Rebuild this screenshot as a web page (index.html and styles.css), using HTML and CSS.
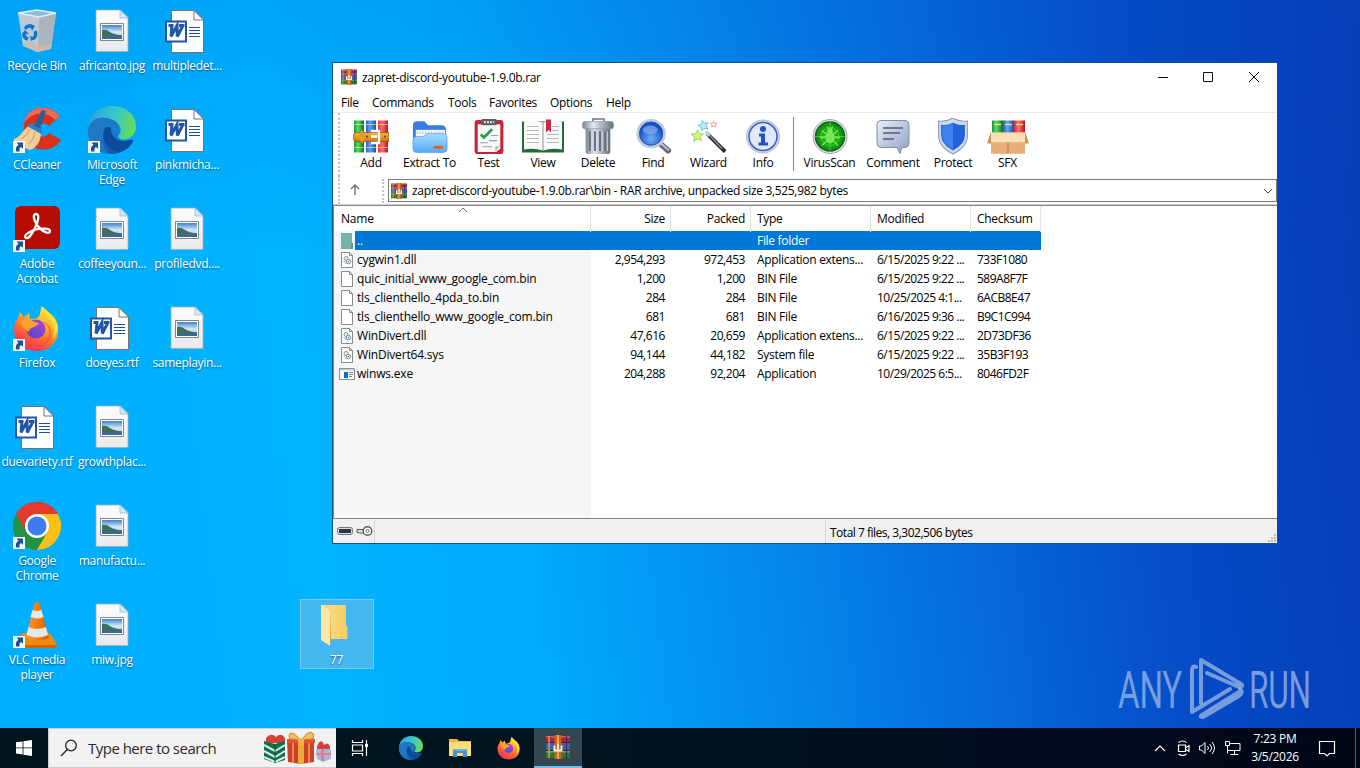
FILE: index.html
```html
<!DOCTYPE html>
<html lang="en">
<head>
<meta charset="utf-8">
<title>Desktop</title>
<link rel="stylesheet" href="styles.css">
</head>
<body>
<svg class="defs" width="0" height="0" aria-hidden="true">
  <defs>
    <linearGradient id="gPage" x2="0" y2="1"><stop offset="0" stop-color="#fdfdfd"/><stop offset="1" stop-color="#e9eaec"/></linearGradient>
    <linearGradient id="gSky" x2="0" y2="1"><stop offset="0" stop-color="#3f83d0"/><stop offset=".5" stop-color="#d6e8f8"/><stop offset="1" stop-color="#9fc0e0"/></linearGradient>
    <linearGradient id="gBin" x2="1" y2="1"><stop offset="0" stop-color="#a9cfe4"/><stop offset="1" stop-color="#b7bec6"/></linearGradient>
    <linearGradient id="gFox" x1=".8" y1="0" x2=".25" y2="1"><stop offset="0" stop-color="#fff04a"/><stop offset=".35" stop-color="#ffb52b"/><stop offset=".65" stop-color="#ff6a2f"/><stop offset="1" stop-color="#f0206a"/></linearGradient>
    <linearGradient id="gFoxIn" x1="1" x2="0" y2="1"><stop offset="0" stop-color="#b445d8"/><stop offset="1" stop-color="#4b46c8"/></linearGradient>
    <linearGradient id="gEdgeA" x1="0" y1=".3" x2="1" y2=".5"><stop offset="0" stop-color="#2aa3dc"/><stop offset=".5" stop-color="#35c6cf"/><stop offset="1" stop-color="#6bdc57"/></linearGradient>
    <linearGradient id="gEdgeB" x2="0" y2="1"><stop offset="0" stop-color="#1d8fd6"/><stop offset="1" stop-color="#1259b0"/></linearGradient>
    <linearGradient id="gCone" x2="1"><stop offset="0" stop-color="#ff9a2c"/><stop offset=".5" stop-color="#f57c0c"/><stop offset="1" stop-color="#d85c00"/></linearGradient>
    <linearGradient id="gGreen" x2="1"><stop offset="0" stop-color="#0f9a32"/><stop offset=".4" stop-color="#58da6a"/><stop offset="1" stop-color="#0b6f24"/></linearGradient>
    <linearGradient id="gBlue" x2="1"><stop offset="0" stop-color="#1d62c8"/><stop offset=".4" stop-color="#62a4f4"/><stop offset="1" stop-color="#1450ac"/></linearGradient>
    <linearGradient id="gRed" x2="1"><stop offset="0" stop-color="#e02b36"/><stop offset=".4" stop-color="#ff7078"/><stop offset="1" stop-color="#b8121e"/></linearGradient>
    <linearGradient id="gBelt" x2="0" y2="1"><stop offset="0" stop-color="#f7b93d"/><stop offset="1" stop-color="#cf7412"/></linearGradient>
    <linearGradient id="gFolder" x2="0" y2="1"><stop offset="0" stop-color="#a9dcff"/><stop offset="1" stop-color="#55a9f4"/></linearGradient>
    <linearGradient id="gSteel" x2="1"><stop offset="0" stop-color="#7c8796"/><stop offset=".35" stop-color="#e3e9f1"/><stop offset="1" stop-color="#66707e"/></linearGradient>
    <linearGradient id="gComment" x2="1" y2="1"><stop offset="0" stop-color="#eaf0f9"/><stop offset="1" stop-color="#8d9fbe"/></linearGradient>
    <radialGradient id="gLens" cx=".5" cy=".7"><stop offset="0" stop-color="#6fb0ff"/><stop offset="1" stop-color="#174fc0"/></radialGradient>
    <radialGradient id="gScan"><stop offset="0" stop-color="#2ed01c"/><stop offset="1" stop-color="#0a8c0c"/></radialGradient>
    <linearGradient id="gYel" x2="1"><stop offset="0" stop-color="#fee08d"/><stop offset="1" stop-color="#f6cb62"/></linearGradient>

    <symbol id="shortcut" viewBox="0 0 12 12">
      <path d="M0 0h12v12H0z" fill="#f7f7f7"/>
      <path d="M3.500 1.500h6.500v6.300L8 6C6.600 7 6.200 8.300 6.600 10.500H3.200C2.200 7.400 3.300 5.200 5.500 3.700z" fill="#1d4f93"/>
    </symbol>
    <symbol id="jpg" viewBox="0 0 48 48">
      <path d="M8 3h24.500l7.500 7.500V44.500H8z" fill="url(#gPage)" stroke="#a5adb3" stroke-width=".8"/>
      <path d="M32 3v8h8z" fill="#cdeafa" stroke="#9fb0ba" stroke-width=".7"/>
      <path d="M12.500 16.500h23v17h-23z" fill="#fff" stroke="#7e8790"/>
      <path d="M14 18h20v14H14z" fill="url(#gSky)"/>
      <path d="M14 23q4-1 8 2t12 3.200v1H14z" fill="#3d7156"/>
      <path d="M14 28.700h20V32H14z" fill="#3c6892"/>
    </symbol>
    <symbol id="word" viewBox="0 0 48 48">
      <path d="M8.500 3.500h22.500L40.500 13V45.500h-32z" fill="#fff" stroke="#77706e"/>
      <path d="M31 3.500V13h9.500z" fill="#fff" stroke="#77706e"/>
      <path d="M26 20.500h11M26 23.500h11M26 26.500h11M26 29.500h11" stroke="#1f4f9d" stroke-width="1"/>
      <path d="M3 14.500h20v20H3z" fill="#fff" stroke="#2155a8" stroke-width="2"/>
      <path d="M5.500 18.500h5M9 18.500l-1 11 6-11 .3 11 5.700-11M16 18.500h5.500" fill="none" stroke="#2155a8" stroke-width="3"/>
    </symbol>
    <symbol id="edge" viewBox="0 0 48 48">
      <path d="M0 24C0 10 10 0 24 0c14 0 24 9 24 20 0 8-5 13-12 13-5 0-6-2-5-4 2-2 3-5 1-9-5-9-27-12-32 4z" fill="url(#gEdgeA)"/>
      <path d="M0 25C1 14 9 11 17 12c10 1 15 7 15 13 0 2-1 3-2 5-2 3 5 6 12 4 3-1 4 0 2 3-5 7-12 11-20 11C10 48 0 38 0 25z" fill="url(#gEdgeB)"/>
      <path d="M17 21c-5 10 1 22 12 25 7 0 12-4 15-9 2-3 1-4-2-3-12 4-20-3-19-13z" fill="#0d4c9c"/>
      <path d="M14 36C11 27 16 20 23 20c5 0 8 3 9 5-1-8-7-13-15-13C9 11 1 15 0 25c0 12 10 22 22 23-4-2-6-6-8-12z" fill="#1f78c4"/>
    </symbol>
    <symbol id="firefox" viewBox="0 0 48 48">
      <path d="M29 2c3 3 5 6 9 9 5 5 8 11 7 18-1 11-10 18-21 18C11 47 1 38 1 25c0-5 2-8 4-11l2-6 4 5 5-4 1 6c3 0 7 0 9-3 2-3 1-7 3-10z" fill="url(#gFox)"/>
      <circle cx="23" cy="25" r="9.500" fill="url(#gFoxIn)"/>
      <path d="M8 17c4-3 9-1 11 0 3 1 6 1 7 3l-5 3c-4 1-5 3-5 5-4-3-8-5-8-11z" fill="#ffa12b"/>
      <path d="M1 25c1 8 5 13 11 16 9 4 20 0 23-8 2-5 1-11-5-16 11 4 11 18 3 24-7 6-18 7-25 1-4-4-7-9-7-17z" fill="#fb4b42" opacity=".45"/>
      <path d="M29 2c1 6 7 11 10 16s3 11 1 16c4-4 6-10 4-15C42 11 34 8 29 2z" fill="#ffdf3c"/>
    </symbol>
    <symbol id="rar" viewBox="0 0 24 24">
      <path d="M0 1h24v6H0z" fill="#a82340"/><path d="M0 8h24v7H0z" fill="#4060b4"/><path d="M0 16h24v7H0z" fill="#287a2c"/>
      <path d="M0 7h24v1H0zM0 15h24v1H0z" fill="#2c2240"/>
      <path d="M0 1h24v1.500H0z" fill="#dc5c60"/><path d="M0 16h24v1.500H0z" fill="#5cbf56"/>
      <path d="M3 1v22" stroke="#d0a04c" stroke-width="1.400"/><path d="M20.500 1v22" stroke="#4a2a50" stroke-width="1.200"/>
      <path d="M8.500 0h7v24h-7z" fill="#c8621c"/><path d="M11 0h2v24h-2z" fill="#efa642"/>
      <path d="M8.500 10.500v5h7v-5M12 9v5" fill="none" stroke="#fff3e2" stroke-width="1.800"/>
    </symbol>
    <symbol id="blank" viewBox="0 0 16 16"><path d="M2.500.5h8l3 3v12h-11z" fill="#fff" stroke="#8b8b8b"/><path d="M10.500.5v3h3" fill="none" stroke="#8b8b8b"/></symbol>
    <symbol id="dll" viewBox="0 0 16 16">
      <path d="M2.500.5h8l3 3v12h-11z" fill="#fff" stroke="#8b8b8b"/><path d="M10.500.5v3h3" fill="none" stroke="#8b8b8b"/>
      <circle cx="7" cy="6.500" r="2" fill="#e8f1f5" stroke="#7f99a7"/><circle cx="9.500" cy="9.500" r="2.300" fill="#dbe5ea" stroke="#8094a0"/><circle cx="9.500" cy="9.500" r=".6" fill="#4e6876"/>
      <path d="M4.500 9l3 3" stroke="#9bb0bc"/>
    </symbol>
  </defs>
</svg>

<main class="desktop">
  <section class="icons">
    <div class="item"><svg class="pic" viewBox="0 0 48 48"><path d="M5 6l19-3 19 3-5 36-14 3-14-6z" fill="url(#gBin)"/><path d="M5 6l21 4 17-4-5 36-13 3z" fill="#c5cbd1" opacity=".75"/><path d="M26 10l17-4-5 36-13 3z" fill="#a3abb4" opacity=".7"/><path d="M5 6l19-3 19 3-17 4z" fill="#8abfdc" stroke="#e4eef4" stroke-width="1.300"/><path d="M11 35l15 4 12-3-1 6-12 3-14-6z" fill="#d6b9a4" opacity=".75"/><g fill="none" stroke="#1276cb" stroke-width="3.400"><path d="M12 22q3-5 8-2M22 24q2 5-2 8M15 32q-5-1-4-6"/></g><path d="M17 17l5 2-3 5zM23 31l-5 3-1-5zM9 27l3-4 4 4z" fill="#1276cb"/></svg><span class="label">Recycle Bin</span></div>
    <div class="item"><svg class="pic" viewBox="0 0 48 48"><path d="M47 10C39 1 26-1 17 6 8 14 9 32 18 39c9 8 24 5 30-5l-12-7c-4 6-10 4-11-1-1-7 5-12 11-6z" fill="#d8311f"/><path d="M47 10C39 1 26-1 17 6q-5 5-6 11C19 6 33 4 42 14z" fill="#ef6a52"/><path d="M1 33c7-2 9-10 15-13l12 7c0 7-4 15-11 17L1 37z" fill="#f1cf94"/><path d="M8 33q6-3 9-10M15 38q6-4 7-12" stroke="#c99f5c" fill="none"/><path d="M14 20l4-3 11 5-1 6z" fill="#2f7dc4"/><path d="M21 20L29 4l4 1-6 17z" fill="#235f9e"/></svg><svg class="short"><use href="#shortcut"/></svg><span class="label">CCleaner</span></div>
    <div class="item"><svg class="pic" viewBox="0 0 48 48"><rect x="2" y="1" width="45" height="43" rx="6" fill="#b60d00"/><path d="M13 33c-3-2 2-6 8-8 7-2 16-2 16 1 0 4-8 1-13-6-4-6-4-11-1-11 4 0 2 8-1 14-4 8-7 11-9 10z" fill="none" stroke="#fff" stroke-width="2.300"/></svg><svg class="short"><use href="#shortcut"/></svg><span class="label">Adobe<br>Acrobat</span></div>
    <div class="item"><svg class="pic"><use href="#firefox"/></svg><svg class="short"><use href="#shortcut"/></svg><span class="label">Firefox</span></div>
    <div class="item"><svg class="pic"><use href="#word"/></svg><span class="label">duevariety.rtf</span></div>
    <div class="item"><svg class="pic" viewBox="0 0 48 48"><circle cx="24" cy="24" r="24" fill="#229342"/><path d="M24 12H44.800A24 24 0 0 1 24 48l10.400-18z" fill="#fbc116"/><path d="M3.200 12A24 24 0 0 1 44.800 12H24L13.600 30z" fill="#e33b2e"/><circle cx="24" cy="24" r="12" fill="#fff"/><circle cx="24" cy="24" r="9.500" fill="#3d7cf0"/></svg><svg class="short"><use href="#shortcut"/></svg><span class="label">Google<br>Chrome</span></div>
    <div class="item"><svg class="pic" viewBox="0 0 48 48"><path d="M9 32h28l7 12-2 3H7l-2-3z" fill="#f08a10"/><path d="M5 44h39l-1 3H7z" fill="#d26400"/><path d="M24 1q2 0 3 3l9 33q-12 6-23 0L21 4q1-3 3-3z" fill="url(#gCone)"/><path d="M19.600 9q4 2 8.800 0l2 7q-6 3-13 0zM15.500 26q8 4 17.500 0l2 8q-11 5-21.500 0z" fill="#e7e7e7"/></svg><svg class="short"><use href="#shortcut"/></svg><span class="label">VLC media<br>player</span></div>

    <div class="item"><svg class="pic"><use href="#jpg"/></svg><span class="label">africanto.jpg</span></div>
    <div class="item"><svg class="pic"><use href="#edge"/></svg><svg class="short"><use href="#shortcut"/></svg><span class="label">Microsoft<br>Edge</span></div>
    <div class="item"><svg class="pic"><use href="#jpg"/></svg><span class="label">coffeeyoun...</span></div>
    <div class="item"><svg class="pic"><use href="#word"/></svg><span class="label">doeyes.rtf</span></div>
    <div class="item"><svg class="pic"><use href="#jpg"/></svg><span class="label">growthplac...</span></div>
    <div class="item"><svg class="pic"><use href="#jpg"/></svg><span class="label">manufactu...</span></div>
    <div class="item"><svg class="pic"><use href="#jpg"/></svg><span class="label">miw.jpg</span></div>

    <div class="item"><svg class="pic"><use href="#word"/></svg><span class="label">multipledet...</span></div>
    <div class="item"><svg class="pic"><use href="#word"/></svg><span class="label">pinkmicha...</span></div>
    <div class="item"><svg class="pic"><use href="#jpg"/></svg><span class="label">profiledvd....</span></div>
    <div class="item"><svg class="pic"><use href="#jpg"/></svg><span class="label">sameplayin...</span></div>
  </section>

  <div class="folder">
    <svg viewBox="0 0 48 48" width="48" height="48"><path d="M8 4h25v20l1.500 2v12H8z" fill="url(#gYel)"/><path d="M8 4l9 6v35l-9-6z" fill="#ffe9a8"/><path d="M17 10v35l1-8z" fill="#d9a93c"/></svg>
    <span class="label">77</span>
  </div>

  <svg class="watermark" viewBox="0 0 200 66" width="200" height="66">
    <g fill="#9db8e6" fill-opacity=".75" font-family="Roboto, sans-serif" font-size="52" font-weight="400">
      <text x="0" y="52" textLength="64" lengthAdjust="spacingAndGlyphs">ANY</text>
      <text x="131" y="52" textLength="62" lengthAdjust="spacingAndGlyphs">RUN</text>
    </g>
    <g fill="none" stroke="#9db8e6" stroke-opacity=".75" stroke-width="4" stroke-linejoin="round" stroke-linecap="round">
      <path d="M83 47V4L123 28q3 3-2 3L89 17"/><path d="M121 36L84 59q-3 2 1 2l36-21q5-4 1-7"/><path d="M78 11q-4-2-4 3v42l38-23"/>
    </g>
  </svg>

  <section class="window">
    <header class="titlebar">
      <svg class="i16"><use href="#rar"/></svg><span class="title">zapret-discord-youtube-1.9.0b.rar</span>
      <svg class="controls" viewBox="0 0 138 28" width="138" height="28"><g fill="none" stroke="#111" stroke-width="1"><path d="M19 13.500h10M64.500 8.500h9v9h-9zM110 8l10 10M120 8l-10 10"/></g></svg>
    </header>
    <nav class="menu"><span class="m1">File</span><span class="m2">Commands</span><span class="m3">Tools</span><span class="m4">Favorites</span><span class="m5">Options</span><span>Help</span></nav>
    <div class="rebar">
      <div class="toolbar">
        <div class="tool t-add"><svg viewBox="0 0 36 36"><path d="M1 2h10v32H1z" fill="url(#gGreen)"/><path d="M13 2h10v32H13z" fill="url(#gBlue)"/><path d="M25 2h10v32H25z" fill="url(#gRed)"/><path d="M1 6h10M1 29h10M13 6h10M13 29h10M25 6h10M25 29h10" stroke="#ffe066" opacity=".7"/><path d="M0 18q0-4 4-4h32v9H4q-4 0-4-5z" fill="url(#gBelt)" stroke="#8e4d06" stroke-width=".7"/><path d="M9 11l4 7-4 7-4-7z" fill="#e89a2a"/><path d="M18 12.500h8v12h-8M18 18h6" fill="none" stroke="#fff" stroke-width="2.300"/><circle cx="14" cy="18" r="1" fill="#693a04"/><circle cx="32" cy="18" r="1" fill="#693a04"/></svg><span>Add</span></div>
        <div class="tool t-ext"><svg viewBox="0 0 38 36"><path d="M1 30V6q0-4 4-4h8l4 4h14q5 0 5 5v19z" fill="#3a7ce8"/><path d="M4 11h31v14H4z" fill="#f5f9ff"/><path d="M5 14h28" stroke="#8fb0dd" stroke-width="2" stroke-dasharray="1 2"/><path d="M1 22q0-4 4-4h7l4-3h17q4 0 4 4v12q0 4-4 4H5q-4 0-4-4z" fill="url(#gFolder)" stroke="#4b9be8" stroke-width=".7"/><rect x="23" y="28" width="10" height="3" rx="1" fill="#e85c2b"/></svg><span>Extract To</span></div>
        <div class="tool t-test"><svg viewBox="0 0 30 36"><rect x="1" y="2" width="28" height="33" rx="3" fill="#cc2034"/><path d="M4 6h22v24l-4 3H4z" fill="#f6f7f8"/><path d="M26 27l-5 6v-5z" fill="#b6bec6"/><rect x="7" y="1" width="16" height="6" rx="2" fill="#5d5b62"/><path d="M10 4h10" stroke="#d8d8dc" stroke-width="2" stroke-dasharray="2 1"/><path d="M7 16l3 3 8-8" fill="none" stroke="#2a9b4c" stroke-width="2.600"/><path d="M17 17h7M15 22h8M6 24h8M9 28h9" stroke="#9aa0a6"/></svg><span>Test</span></div>
        <div class="tool t-view"><svg class="w44" viewBox="0 0 44 36"><path d="M1 3h42v31H1z" fill="#246b35"/><path d="M3 3q10-2 19 1 9-3 19-1v28q-10-2-19 1-9-3-19-1z" fill="#fafafa"/><path d="M22 4v28" stroke="#8e9494"/><path d="M6 8h12M6 12h12M6 16h12M6 20h12M6 24h12M26 16h12M26 20h12M26 24h12M31 8h7M31 12h7" stroke="#b3b8ba"/><path d="M25 1h5v13l-2.500-2.500L25 14z" fill="#c82c38"/></svg><span>View</span></div>
        <div class="tool t-del"><svg viewBox="0 0 32 36"><path d="M11 3V1h11v2" fill="none" stroke="#707a86" stroke-width="1.500"/><path d="M4 10h24v23q0 2-2 2H6q-2 0-2-2z" fill="url(#gSteel)"/><rect x="1" y="3.500" width="30" height="7" rx="2" fill="url(#gSteel)" stroke="#7c8795" stroke-width=".6"/><path d="M8 13v19M13 13v19M18 13v19M23 13v19" stroke="#66707e" stroke-width="2"/><path d="M10 13v19M15 13v19M20 13v19M25 13v19" stroke="#d5dde8"/></svg><span>Delete</span></div>
        <div class="tool t-find"><svg viewBox="0 0 38 36"><path d="M26 25l9 8" stroke="#656b74" stroke-width="6" stroke-linecap="round"/><path d="M26 24l9 8" stroke="#bec5ce" stroke-width="2" stroke-linecap="round"/><circle cx="17" cy="15" r="14" fill="url(#gLens)" stroke="#bccbe0" stroke-width="3"/><circle cx="17" cy="15" r="12.200" fill="none" stroke="#2b58a8"/><ellipse cx="16" cy="11" rx="8" ry="4.500" fill="#8db4ee" opacity=".65"/></svg><span>Find</span></div>
        <div class="tool t-wiz"><svg viewBox="0 0 38 36"><path d="M17 15L36 34" stroke="#24272c" stroke-width="4"/><path d="M17 14l16 17" stroke="#8b9098" stroke-width="1.500"/><path d="M15.500 13l4 4" stroke="#c9cbce" stroke-width="4"/><path d="M7 11l2 4 4 .3-3 3 1.300 4-4.300-2-4.300 3 1-5L0 15.500l5-.5z" fill="#d4f287" stroke="#97d652"/><path d="M12 1l2 3 4-.5-2 3.300 2 3.200-4-.5-3 2.500-.5-4-3-1.800 3.500-1.500z" fill="#bdeafb" stroke="#5cc3ec"/><path d="M24 2l1 2h2.400l-1.800 1.700.6 2.300-2.200-1.200L21.800 8l.5-2.300-1.800-1.700h2.600z" fill="#fff" stroke="#ee8078" stroke-width=".8"/></svg><span>Wizard</span></div>
        <div class="tool t-info"><svg viewBox="0 0 36 36"><circle cx="18" cy="18" r="16.500" fill="#c8d3ef" stroke="#aebbe0"/><circle cx="18" cy="18" r="14" fill="#e0e9fa" stroke="#3c60b8" stroke-width="1.500"/><circle cx="18" cy="10.500" r="3" fill="#2450c8"/><path d="M14 15h6v9h3v3H13.500v-3H16v-6h-2z" fill="#2450c8"/></svg><span>Info</span></div>
        <i class="vsep"></i>
        <div class="tool t-scan"><svg viewBox="0 0 36 36"><circle cx="18" cy="18" r="17" fill="#dfe4e2" stroke="#8b9690" stroke-width=".8"/><circle cx="18" cy="18" r="14.500" fill="url(#gScan)" stroke="#185a20" stroke-width="1.500"/><path d="M18 3v30M3 18h30" stroke="#8be878" stroke-width=".5"/><circle cx="18" cy="18" r="9" fill="none" stroke="#6bdf56" stroke-width=".6"/><ellipse cx="18" cy="19" rx="4.500" ry="6" fill="#7be65a"/><circle cx="18" cy="12.500" r="2.700" fill="#7be65a"/><path d="M10 12l5 4M26 12l-5 4M8 19h20M10 27l5-5M26 27l-5-5M15 8l2 3M21 8l-2 3" stroke="#7be65a" stroke-width="1.300"/></svg><span>VirusScan</span></div>
        <div class="tool t-com"><svg viewBox="0 0 36 36"><path d="M6 2h24q4 0 4 4v18q0 5-4 5h-3l-2 6-3-6H6q-4 0-4-5V6q0-4 4-4z" fill="url(#gComment)" stroke="#7e8fae"/><path d="M8 9.500h20M8 14.500h17M8 20.500h11" stroke="#4d5b7c" stroke-width="1.600"/></svg><span>Comment</span></div>
        <div class="tool t-prot"><svg viewBox="0 0 32 36"><path d="M16 0q7 4 14 3v14q0 11-14 18Q2 28 2 17V3q7 1 14-3z" fill="#cfdaea" stroke="#8798b4"/><path d="M16 5q6 3 11 2v10q0 8-11 14Q5 25 5 17V7q5 1 11-2z" fill="#3d83f0" stroke="#285fc4"/><path d="M16 5q6 3 11 2v10q0 8-11 14z" fill="#2462d8"/></svg><span>Protect</span></div>
        <div class="tool t-sfx"><svg class="w44" viewBox="0 0 44 36"><path d="M6 2h11v14H6z" fill="url(#gGreen)"/><path d="M17 2h11v14H17z" fill="url(#gBlue)"/><path d="M28 2h11v14H28z" fill="url(#gRed)"/><path d="M6 6h33" stroke="#f2df5c" stroke-dasharray="7 4" stroke-dashoffset="-2" stroke-width="1.500"/><path d="M5 14h34v21H5z" fill="#dfa46c"/><path d="M5 14h34l2 10H3z" fill="#fae0b4"/><path d="M5 13L1 25h4zM39 13l4 12h-4z" fill="#d1935a"/><path d="M5 24h34v11H5z" fill="#e9ae7a"/><path d="M22 24v11" stroke="#b87a43"/></svg><span>SFX</span></div>
      </div>
      <div class="addressbar">
        <svg class="up" viewBox="0 0 12 12"><path d="M6 11V1M2 5l4-4 4 4" fill="none" stroke="#777" stroke-width="1.500"/></svg>
        <div class="address"><svg class="i16"><use href="#rar"/></svg><span>zapret-discord-youtube-1.9.0b.rar\bin - RAR archive, unpacked size 3,525,982 bytes</span><svg class="drop" viewBox="0 0 10 6"><path d="M1 1l4 4 4-4" fill="none" stroke="#444"/></svg></div>
      </div>
    </div>
    <div class="list">
      <div class="row head"><span>Name<svg class="sort" viewBox="0 0 10 6"><path d="M1 5l4-4 4 4" fill="none" stroke="#777"/></svg></span><span class="r">Size</span><span class="r">Packed</span><span>Type</span><span>Modified</span><span>Checksum</span></div>
      <div class="row selected"><span><svg class="fi" viewBox="0 0 16 16"><path d="M2 0h11v13l1 1v2H2z" fill="#78b0ae"/><path d="M12 10h2v6h-2z" fill="#5c94a0"/></svg><b>..</b></span><span></span><span></span><span>File folder</span><span></span><span></span></div>
      <div class="row"><span><svg class="fi"><use href="#dll"/></svg>cygwin1.dll</span><span class="r">2,954,293</span><span class="r">972,453</span><span>Application extens...</span><span class="d">6/15/2025 9:22 ...</span><span class="d">733F1080</span></div>
      <div class="row"><span><svg class="fi"><use href="#blank"/></svg>quic_initial_www_google_com.bin</span><span class="r">1,200</span><span class="r">1,200</span><span>BIN File</span><span class="d">6/15/2025 9:22 ...</span><span class="d">589A8F7F</span></div>
      <div class="row"><span><svg class="fi"><use href="#blank"/></svg>tls_clienthello_4pda_to.bin</span><span class="r">284</span><span class="r">284</span><span>BIN File</span><span class="d">10/25/2025 4:1...</span><span class="d">6ACB8E47</span></div>
      <div class="row"><span><svg class="fi"><use href="#blank"/></svg>tls_clienthello_www_google_com.bin</span><span class="r">681</span><span class="r">681</span><span>BIN File</span><span class="d">6/16/2025 9:36 ...</span><span class="d">B9C1C994</span></div>
      <div class="row"><span><svg class="fi"><use href="#dll"/></svg>WinDivert.dll</span><span class="r">47,616</span><span class="r">20,659</span><span>Application extens...</span><span class="d">6/15/2025 9:22 ...</span><span class="d">2D73DF36</span></div>
      <div class="row"><span><svg class="fi"><use href="#dll"/></svg>WinDivert64.sys</span><span class="r">94,144</span><span class="r">44,182</span><span>System file</span><span class="d">6/15/2025 9:22 ...</span><span class="d">35B3F193</span></div>
      <div class="row"><span><svg class="fi" viewBox="0 0 16 16"><path d="M.5 2.500h15v11H.5z" fill="#fff" stroke="#8a8f94"/><path d="M1 3h14v1.500H1z" fill="#c9ced2"/><path d="M5 6h4v6H5z" fill="#0f6fd0"/><path d="M10 6.500h4M10 8.500h4M10 10.500h3" stroke="#6e8698"/></svg>winws.exe</span><span class="r">204,288</span><span class="r">92,204</span><span>Application</span><span class="d">10/29/2025 6:5...</span><span class="d">8046FD2F</span></div>
    </div>
    <footer class="status">
      <div class="cell c1"><svg viewBox="0 0 36 12" width="36" height="12"><rect x=".5" y="2.500" width="15" height="7" rx="2" fill="#d7dfe2" stroke="#6c7a80"/><path d="M2 4h12v4H2z" fill="#2c3b43"/><path d="M20 4.500h8v3h-2l-1 1-1-1-1 1-1-1h-2z" fill="#ddd" stroke="#555"/><circle cx="30.500" cy="6" r="4.300" fill="#fff" stroke="#5d5d5d" stroke-width="1.500"/><circle cx="30.500" cy="6" r="1.500" fill="none" stroke="#6d6d6d"/></svg></div>
      <div class="cell c2"></div>
      <div class="cell c3">Total 7 files, 3,302,506 bytes</div>
      <svg class="grip" viewBox="0 0 10 10" width="10" height="10"><path d="M7 1h2v2H7zM7 4h2v2H7zM7 7h2v2H7zM4 4h2v2H4zM4 7h2v2H4zM1 7h2v2H1z" fill="#bbb"/></svg>
    </footer>
  </section>
</main>

<footer class="taskbar">
  <div class="start"><svg viewBox="0 0 16 16" width="16" height="16"><path d="M0 2.300L6.600 1.400v6.100H0zM7.400 1.300L16 0v7.500H7.400zM0 8.300h6.600v6.200L0 13.600zM7.400 8.300H16V16l-8.600-1.200z" fill="#fff"/></svg></div>
  <div class="search">
    <svg viewBox="0 0 18 18" width="18" height="18"><circle cx="11" cy="6.500" r="5.300" fill="none" stroke="#222" stroke-width="1.300"/><path d="M7.300 10.500L1 17" stroke="#222" stroke-width="1.300"/></svg>
    <span>Type here to search</span>
    <svg class="gifts" viewBox="0 0 68 34" width="68" height="34"><path d="M2 7q5-6 10-1 5-5 9 1v5H2z" fill="#d8402f"/><path d="M0 10l11 3 10-3v19l-10 3-11-4z" fill="#146c55"/><path d="M0 14l11 6 10-6M0 20l11 6 10-6M0 26l11 5 10-5" fill="none" stroke="#d9f2e2" stroke-width="2"/><path d="M11 13v19" stroke="#0b4c3c"/><path d="M23 10h27v21l-13 2-13-2z" fill="#cf3d2c"/><path d="M29 10v22M45 10v22" stroke="#e9a93f" stroke-width="1.500"/><path d="M34 9h6v24h-6z" fill="#e9a93f"/><path d="M23 8h28v4H23z" fill="#e4513a"/><path d="M36 9C29-1 23 1 26 8zM38 9c6-11 14-9 11-1z" fill="#f3bd57" stroke="#c6852a"/><path d="M34 7h6v7h-6z" fill="#f0b348"/><path d="M53 15q4-9 7-1 5-4 6 2v4H53z" fill="#d94038"/><path d="M52 18h15v10l-8 3-6-3z" fill="#a8b6e0"/><path d="M57 18h3v12h-3zM52 22h15v2H52z" fill="#e87b84"/></svg>
  </div>
  <div class="task"><svg viewBox="0 0 18 18" width="18" height="18"><g fill="none" stroke="#fff" stroke-width="1.200"><path d="M1.500 1v2.500h10V1M1.500 17v-2.500h10V17M1.500 6h10v6h-10zM15.500 1v16"/></g><path d="M14 5h3v3h-3z" fill="#fff"/></svg></div>
  <div class="task wide first"><svg width="24" height="24"><use href="#edge"/></svg></div>
  <div class="task wide"><svg viewBox="0 0 22 20" width="22" height="20"><path d="M0 1h8l2 2h12v15H0z" fill="#f0b93a"/><path d="M0 4h22v14H0z" fill="#ffdc7a"/><path d="M4 19v-6q0-2 2-2h10q2 0 2 2v6h-4v-4H8v4z" fill="#3f95cf"/><path d="M6 11h10v2H6z" fill="#67b5e4"/></svg></div>
  <div class="task wide"><svg width="24" height="24"><use href="#firefox"/></svg></div>
  <div class="task active"><svg width="24" height="24"><use href="#rar"/></svg></div>
  <div class="tray">
    <svg viewBox="0 0 12 8" width="12" height="8"><path d="M1 7l5-5 5 5" fill="none" stroke="#fff" stroke-width="1.200"/></svg>
    <svg viewBox="0 0 14 16" width="14" height="16"><g fill="none" stroke="#fff" stroke-width="1.200"><path d="M2.500 5h7v6.500h-7zM10 7.500l3-2v6l-3-2M2.500 2.500q4-3 8 0M2.500 14q4 3 8 0"/></g></svg>
    <svg viewBox="0 0 18 16" width="18" height="16"><g fill="none" stroke="#fff"><path d="M1.500 6h2L7 2.500v11L3.500 10h-2zM9.500 6q2 2 0 4M11.500 4q4 4 0 8M14 2q5 6 0 12"/></g></svg>
    <svg viewBox="0 0 17 16" width="17" height="16"><g fill="none" stroke="#fff"><path d="M6 3.500h10v7H4M10.500 11v3M6.500 14.500h8M1.500 1.500h4v4h-4zM3.500 5.500v8"/></g></svg>
    <div class="clock">7:23 PM<br>3/5/2026</div>
    <svg class="note" viewBox="0 0 18 17" width="18" height="17"><path d="M1.500 1.500h15v12h-5l-2.500 2.500L6.500 13.500h-5z" fill="none" stroke="#fff" stroke-width="1.200"/></svg>
  </div>
</footer>
</body>
</html>
```
FILE: styles.css
```css
* { box-sizing: border-box; }
html, body { height: 100%; }
body {
  margin: 0;
  overflow: hidden;
  display: flex;
  flex-direction: column;
  font: 12px/15px "Open Sans", "Noto Sans", sans-serif;
  letter-spacing: -0.3px;
  color: #000;
}
svg { display: block; flex: none; }
.defs { position: absolute; }

/* Desktop */
.desktop {
  position: relative;
  height: 728px;
  flex: none;
  background:
    linear-gradient(180deg, rgba(0, 80, 200, .14), rgba(0, 80, 200, 0) 35%),
    linear-gradient(83deg, #00aefe 0%, #00b3ff 24%, #00aafc 38%, #048cee 53%, #0569dc 69%, #054ac6 83%, #063bb5 100%);
}
.icons {
  display: grid;
  grid-template-columns: repeat(3, 75px);
  grid-template-rows: repeat(7, 99px);
  grid-auto-flow: column;
  width: 225px;
}
.item { position: relative; padding-top: 7px; }
.pic { width: 48px; height: 48px; margin-left: 13px; }
.short { position: absolute; left: 13px; top: 42px; width: 12px; height: 12px; }
.label {
  display: block;
  margin: 3px -4px 0 -5px;
  text-align: center;
  color: #fff;
  white-space: nowrap;
  text-shadow: 0 1px 2px rgba(0, 0, 0, .55);
}
.folder {
  position: absolute;
  left: 300px;
  top: 599px;
  width: 74px;
  height: 70px;
  padding-top: 1px;
  background: rgba(150, 190, 225, .45);
  border: 1px solid #7cc8f5;
}
.folder svg { margin-left: 12px; }
.watermark { position: absolute; left: 1118px; top: 656px; }

/* Archive window */
.window {
  position: absolute;
  left: 332px;
  top: 62px;
  width: 946px;
  height: 482px;
  border: 1px solid #0b5394;
  background: #fff;
  display: flex;
  flex-direction: column;
}
.i16 { width: 16px; height: 16px; }
.titlebar { height: 29px; display: flex; align-items: center; padding-left: 8px; }
.titlebar .i16 { margin-top: -2px; }
.title { margin-left: 5px; flex: 1; }
.menu { height: 21px; display: flex; padding: 3px 8px 0; border-bottom: 1px solid #ececec; }
.m1 { width: 31px; }
.m2 { width: 76px; }
.m3 { width: 41px; }
.m4 { width: 61px; }
.m5 { width: 56px; }
.rebar { height: 92px; padding-left: 5px; border-bottom: 1px solid #d0d0d0; }
.toolbar {
  height: 63px;
  display: flex;
  border-left: 2px dotted #c4c4c4;
  padding: 5px 0 0 10px;
}
.tool { display: flex; flex-direction: column; align-items: center; white-space: nowrap; }
.tool svg { width: 36px; height: 37px; }
.tool .w44 { width: 44px; }
.t-add { width: 42px; }
.t-ext { width: 75px; }
.t-test { width: 43px; }
.t-view { width: 66px; }
.t-del { width: 44px; }
.t-find { width: 66px; }
.t-wiz { width: 45px; }
.t-info { width: 64px; }
.vsep { width: 1px; height: 54px; background: #888; margin: -1px 0 0 -2px; }
.t-scan { width: 71px; }
.t-com { width: 56px; }
.t-prot { width: 64px; }
.t-sfx { width: 45px; }
.addressbar { height: 28px; display: flex; border-left: 2px dotted #c4c4c4; padding: 3px 0 2px; }
.up { width: 12px; height: 12px; margin: 5px 27px 0 9px; }
.address {
  flex: 1;
  display: flex;
  align-items: center;
  height: 23px;
  border: 1px solid #7a7a7a;
  padding: 0 3px 0 2px;
  position: relative;
}
.address::before { content: ""; position: absolute; left: -7px; top: -1px; height: 24px; border-left: 2px dotted #c4c4c4; }
.address span { margin-left: 5px; flex: 1; letter-spacing: -.325px; }
.drop { width: 10px; height: 6px; }

.list {
  height: 314px;
  border: 1px solid #828790;
  border-right: 0;
  background: linear-gradient(90deg, #f6f6f6 257px, #fff 257px);
}
.row {
  display: grid;
  grid-template-columns: 257px 80px 80px 120px 100px 70px;
  width: 707px;
  height: 19px;
  line-height: 19px;
  white-space: nowrap;
}
.row > span { padding: 0 6px; }
.row > span:first-child { display: flex; align-items: center; padding-left: 5px; letter-spacing: -.18px; }
.row > .r { text-align: right; padding-right: 6px; letter-spacing: -.45px; }
.row > .d { letter-spacing: -.5px; }
.fi { width: 16px; height: 16px; margin-right: 2px; }
.head { height: 25px; line-height: 26px; background: #fff; }
.head > span { border-right: 1px solid #e5e5e5; position: relative; }
.head > .r { letter-spacing: -.3px; padding-right: 5px; }
.head > span:first-child { padding-left: 7px; }
.sort { position: absolute; left: 124px; top: 1px; width: 10px; height: 6px; }
.selected { color: #fff; background: linear-gradient(90deg, #f6f6f6 21px, #0078d7 21px); }
.selected b { font-weight: 400; }

.status { flex: 1; display: flex; background: #f0f0f0; position: relative; padding-top: 2px; }
.cell { border-right: 1px solid #d5d5d5; height: 22px; line-height: 24px; }
.c1 { width: 42px; padding: 4px 0 0 4px; }
.c2 { width: 451px; }
.c3 { flex: 1; border: 0; padding-left: 4px; letter-spacing: -.49px; }
.grip { position: absolute; right: 0; bottom: 0; }

/* Taskbar */
.taskbar {
  height: 40px;
  display: flex;
  align-items: center;
  color: #fff;
  background: linear-gradient(90deg, #00161f, #00141f 40%, #000a1c 80%, #000618);
}
.start { width: 48px; padding-left: 16px; }
.search {
  width: 288px;
  height: 40px;
  display: flex;
  align-items: center;
  padding: 0 4px 0 11px;
  background: #f2f2f2;
  border: 1px solid #c9cdcf;
  border-right: 0;
  color: #2b2b2b;
  font-size: 15px;
  letter-spacing: -.52px;
}
.search span { margin-left: 10px; flex: 1; white-space: nowrap; }
.task { width: 48px; height: 40px; display: flex; align-items: center; justify-content: center; }
.wide { width: 49px; }
.first { margin-left: 2px; }
.active { width: 48px; margin-left: 1px; background: #34464f; border-bottom: 2px solid #76b9ed; }
.tray { margin-left: auto; display: flex; align-items: center; height: 40px; padding-right: 19px; gap: 8px; border-right: 1px solid #59616b; margin-right: 4px; }
.tray svg:first-child { margin-right: 2px; }
.clock { width: 54px; text-align: center; line-height: 18px; white-space: nowrap; margin-left: -1px; }
.note { margin-left: 8px; }
```
